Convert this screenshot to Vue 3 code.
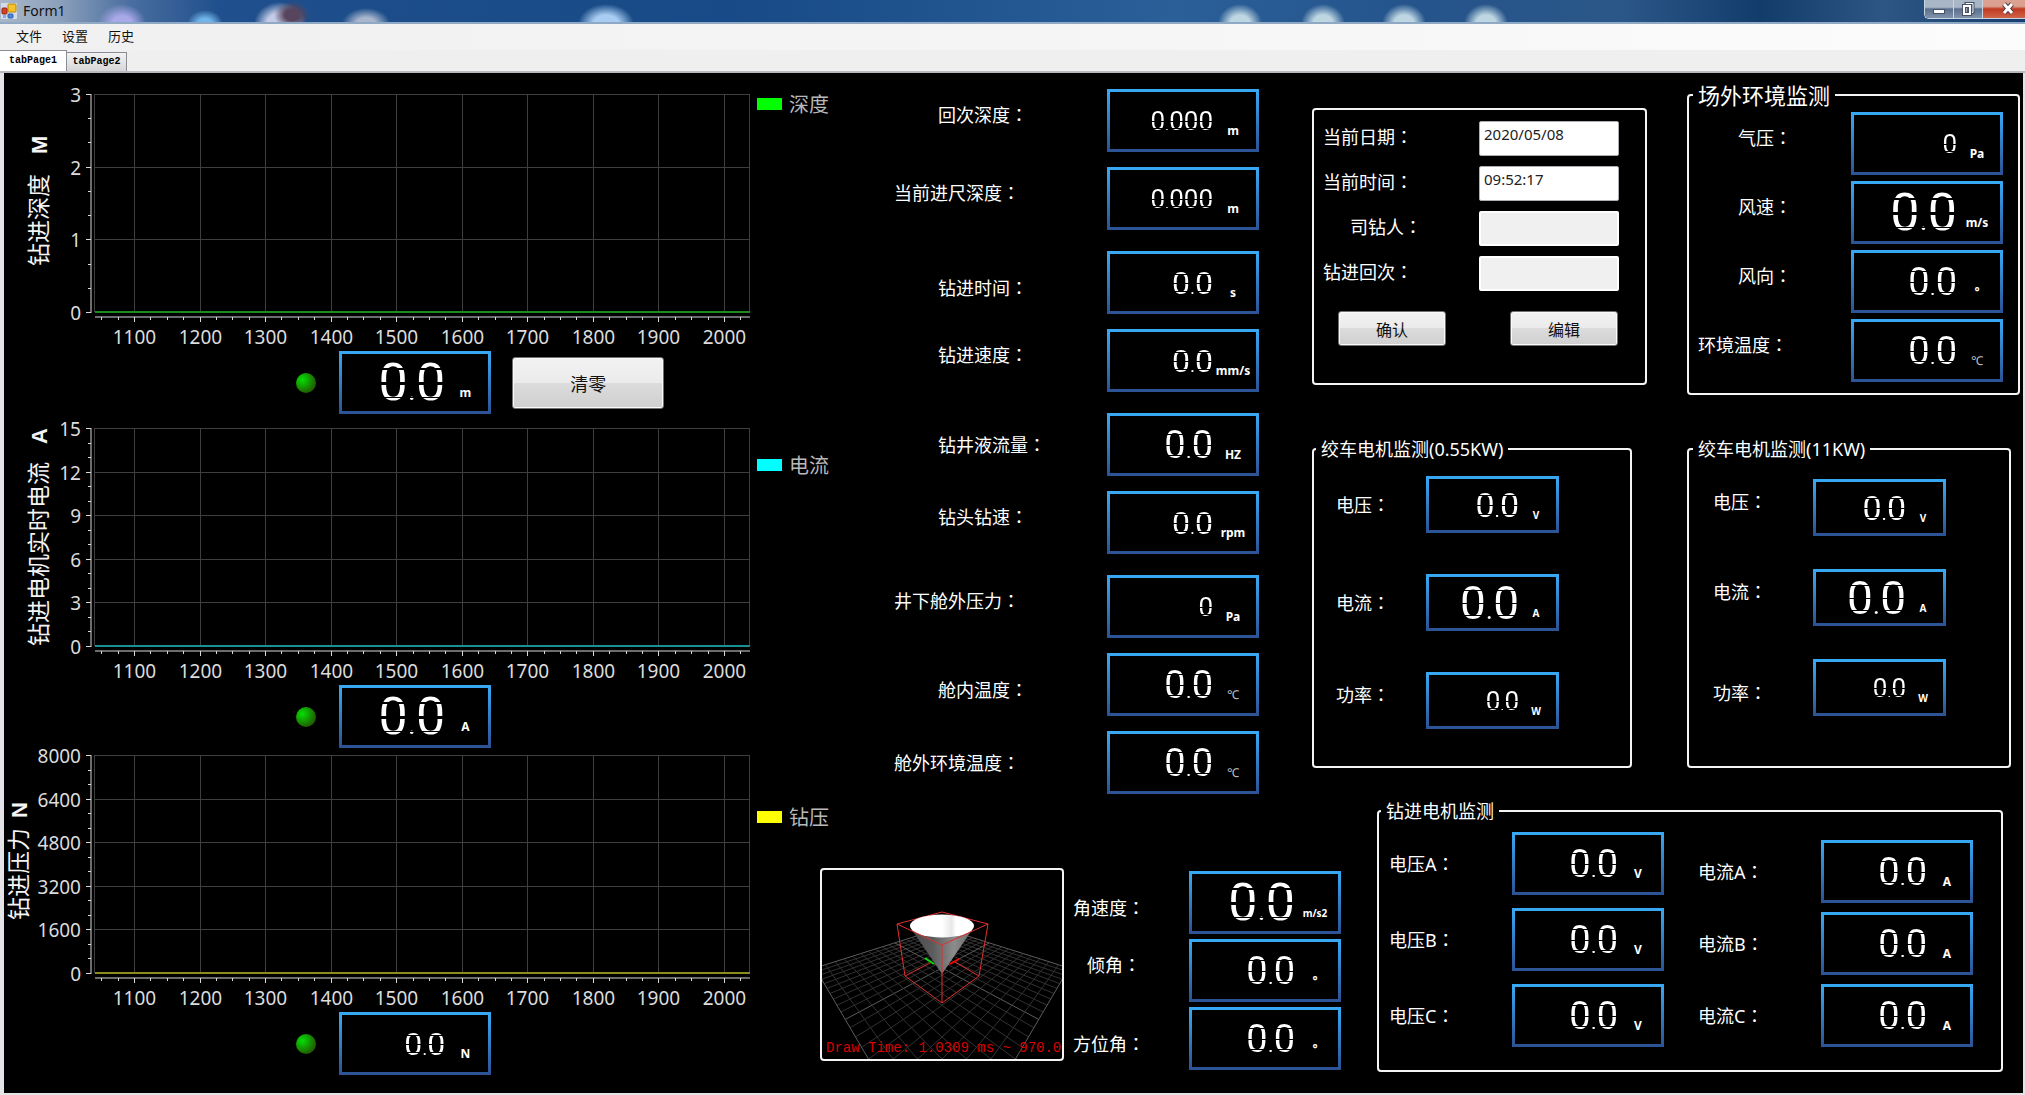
<script setup>
import { h as el } from 'vue'

const menus = ['文件', '设置', '历史']

// Digital readout: the decimal point is set smaller than the digits.
const Digits = ({ value = '0.0', size }) => {
  const [whole, frac] = value.split('.')
  const parts = frac ? [whole, el('span', { class: 'dot' }, '.'), frac] : [whole]
  return el('span', { class: 'num', style: { fontSize: size + 'px' } }, parts)
}

const xTicks = [1100, 1200, 1300, 1400, 1500, 1600, 1700, 1800, 1900, 2000]
const plot = { left: 91, right: 746, top: 6, height: 218 }
const xAt = (v) => Math.round(130 + (v - 1100) * 0.6555) + 0.5
const minorX = []
for (let v = 1050; v <= 2025; v += 25) {
  if (v % 100 !== 0) minorX.push(v)
}

function yTicks(values) {
  const step = plot.height / (values.length - 1)
  return values.map((v, i) => ({ v, y: Math.round(plot.top + i * step) + 0.5 }))
}
function yMinor(values) {
  const n = (values.length - 1) * 3
  return Array.from({ length: n }, (_, i) => Math.round(plot.top + (i * plot.height) / n) + 0.5)
}

const charts = [
  { id: 'depth', title: '钻进深度', mark: 'M', gap: 20, tx: 43, ty: 178, values: [3, 2, 1, 0], line: '#1c8a1c', legend: '深度', color: '#00ff00', size: 52, unit: 'm', clear: true },
  { id: 'current', title: '钻进电机实时电流', mark: 'A', gap: 18, tx: 43, ty: 224, values: [15, 12, 9, 6, 3, 0], line: '#1a9090', legend: '电流', color: '#00ffff', size: 52, unit: 'A' },
  { id: 'force', title: '钻进压力', mark: 'N', gap: 10, tx: 23, ty: 171, values: [8000, 6400, 4800, 3200, 1600, 0], line: '#8c8c1c', legend: '钻压', color: '#ffff00', size: 32, unit: 'N' },
]

const readings = [
  { name: '回次深度', value: '0.000', unit: 'm', size: 26, at: 'up' },
  { name: '当前进尺深度', value: '0.000', unit: 'm', size: 26, at: 'up', long: true },
  { name: '钻进时间', value: '0.0', unit: 's', size: 32, at: 'down', far: true },
  { name: '钻进速度', value: '0.0', unit: 'mm/s', size: 32, at: 'up' },
  { name: '钻井液流量', value: '0.0', unit: 'HZ', size: 38, at: 'mid', far: true },
  { name: '钻头钻速', value: '0.0', unit: 'rpm', size: 32, at: 'up' },
  { name: '井下舱外压力', value: '0', unit: 'Pa', size: 26, at: 'up', long: true, far: true },
  { name: '舱内温度', value: '0.0', unit: '℃', size: 38, at: 'down' },
  { name: '舱外环境温度', value: '0.0', unit: '℃', size: 38, at: 'mid', long: true },
]

const env = [
  { name: '气压', value: '0', unit: 'Pa', size: 26 },
  { name: '风速', value: '0.0', unit: 'm/s', size: 52 },
  { name: '风向', value: '0.0', unit: '°', size: 38 },
  { name: '环境温度', value: '0.0', unit: '℃', size: 38, long: true },
]

const winches = [
  {
    id: 'w1', title: '绞车电机监测(0.55KW)',
    rows: [
      { name: '电压', unit: 'V', size: 34, at: 'mid' },
      { name: '电流', unit: 'A', size: 46, at: 'mid' },
      { name: '功率', unit: 'W', size: 26, at: 'up' },
    ],
  },
  {
    id: 'w2', title: '绞车电机监测(11KW)',
    rows: [
      { name: '电压', unit: 'V', size: 34, at: 'up' },
      { name: '电流', unit: 'A', size: 46, at: 'up' },
      { name: '功率', unit: 'W', size: 26, at: 'down' },
    ],
  },
]

const angles = [
  { name: '角速度', unit: 'm/s2', size: 52, at: 'down' },
  { name: '倾角', unit: '°', size: 38, at: 'up', indent: true },
  { name: '方位角', unit: '°', size: 38, at: 'down' },
]

const motor = [
  { id: 'mv', unit: 'V', names: ['电压A', '电压B', '电压C'] },
  { id: 'ma', unit: 'A', names: ['电流A', '电流B', '电流C'] },
]

// Perspective projection of the unit square onto the floor of the 3D view.
const floor = { b: [122, 60], r: [249, 100], f: [122, 316], l: [-5, 100] }
const sx = floor.b[0] - floor.r[0] + floor.f[0] - floor.l[0]
const sy = floor.b[1] - floor.r[1] + floor.f[1] - floor.l[1]
const d1 = [floor.r[0] - floor.f[0], floor.r[1] - floor.f[1]]
const d2 = [floor.l[0] - floor.f[0], floor.l[1] - floor.f[1]]
const det = d1[0] * d2[1] - d2[0] * d1[1]
const g = (sx * d2[1] - d2[0] * sy) / det
const h = (d1[0] * sy - sx * d1[1]) / det
function project(u, v) {
  const w = g * u + h * v + 1
  const x = (floor.r[0] * (1 + g) - floor.b[0]) * u + (floor.l[0] * (1 + h) - floor.b[0]) * v + floor.b[0]
  const y = (floor.r[1] * (1 + g) - floor.b[1]) * u + (floor.l[1] * (1 + h) - floor.b[1]) * v + floor.b[1]
  return [x / w, y / w]
}
const floorLines = []
for (let i = 0; i <= 20; i++) {
  const t = i / 20
  const edge = i % 10 === 0
  const [a, b, c, d] = [project(t, 0), project(t, 1), project(0, t), project(1, t)]
  floorLines.push({ a, b, edge }, { a: c, b: d, edge })
}
</script>

<template>
  <div class="window">
    <header class="titlebar">
      <svg class="app-icon" width="16" height="16" viewBox="0 0 16 16" aria-hidden="true">
        <rect x="0" y="0" width="16" height="16" fill="#dfe6ee" opacity=".8" />
        <rect x="7" y="1" width="8" height="8" rx="1" fill="#f5c22c" stroke="#b88710" />
        <rect x="1" y="5" width="5" height="6" rx="1" fill="#d8402c" stroke="#952212" />
        <rect x="7" y="11" width="5" height="4" rx="1" fill="#4b86e0" stroke="#2a5cae" />
        <rect x="2" y="12" width="3" height="3" fill="#7fb0ee" />
      </svg>
      <span class="app-title">Form1</span>
      <div class="window-buttons">
        <button type="button" aria-label="最小化">
          <svg width="14" height="12" viewBox="0 0 14 12"><rect x="1.500" y="6.500" width="11" height="4" fill="#fff" stroke="#45526a" /></svg>
        </button>
        <button type="button" aria-label="还原">
          <svg width="14" height="14" viewBox="0 0 14 14" fill="none">
            <path d="M5 1.500h7v9H5z" stroke="#45526a" stroke-width="3" /><path d="M5 1.500h7v9H5z" stroke="#fff" />
            <path d="M3 4h6v8H3z" stroke="#45526a" stroke-width="4" /><path d="M3 4h6v8H3z" stroke="#fff" stroke-width="2" />
          </svg>
        </button>
        <button type="button" class="close" aria-label="关闭">
          <svg width="14" height="14" viewBox="0 0 14 14" fill="none">
            <path d="M3 2l8 9M11 2l-8 9" stroke="#5a3a44" stroke-width="5" /><path d="M3 2l8 9M11 2l-8 9" stroke="#fff" stroke-width="3" />
          </svg>
        </button>
      </div>
    </header>

    <nav class="menubar">
      <button v-for="m in menus" :key="m" type="button">{{ m }}</button>
    </nav>

    <div class="tabs" role="tablist">
      <button type="button" role="tab" class="tab active" aria-selected="true">tabPage1</button>
      <button type="button" role="tab" class="tab" aria-selected="false">tabPage2</button>
    </div>

    <main class="page">
      <section class="charts">
        <div v-for="c in charts" :key="c.id" class="chart-block" :class="c.id">
          <div class="chart-row">
            <svg class="chart" viewBox="0 0 750 263">
              <text class="axis-title" :transform="`translate(${c.tx} ${c.ty}) rotate(-90)`">{{ c.title }}<tspan class="mark" :dx="c.gap">{{ c.mark }}</tspan></text>
              <g class="grid">
                <line v-for="t in yTicks(c.values)" :key="'g' + t.v" :x1="plot.left" :x2="plot.right" :y1="t.y" :y2="t.y" />
                <line v-for="v in xTicks" :key="'x' + v" :x1="xAt(v)" :x2="xAt(v)" y1="6" y2="224" />
                <line x1="90.500" x2="90.500" y1="6" y2="224" />
                <line x1="745.500" x2="745.500" y1="6" y2="224" />
              </g>
              <line :x1="plot.left" :x2="plot.right" y1="224" y2="224" :stroke="c.line" stroke-width="2" />
              <g class="axis">
                <line x1="87" x2="87" y1="6" y2="225" />
                <line v-for="t in yTicks(c.values)" :key="'t' + t.v" x1="82" x2="87" :y1="t.y" :y2="t.y" />
                <line v-for="y in yMinor(c.values)" :key="'m' + y" x1="84" x2="87" :y1="y" :y2="y" />
                <line x1="91" x2="746" y1="229" y2="229" />
                <line v-for="v in xTicks" :key="'t' + v" :x1="xAt(v)" :x2="xAt(v)" y1="229" y2="234" />
                <line v-for="v in minorX" :key="'m' + v" :x1="xAt(v)" :x2="xAt(v)" y1="229" y2="232" />
              </g>
              <g class="tick-text">
                <text v-for="t in yTicks(c.values)" :key="t.v" x="77" :y="t.y + 7" text-anchor="end">{{ t.v }}</text>
                <text v-for="v in xTicks" :key="v" :x="xAt(v)" y="256" text-anchor="middle">{{ v }}</text>
              </g>
            </svg>
            <div class="legend"><i :style="{ background: c.color }"></i><span>{{ c.legend }}</span></div>
          </div>
          <div class="chart-foot">
            <span class="led"></span>
            <output class="meter"><Digits :size="c.size" /><span class="unit">{{ c.unit }}</span></output>
            <button v-if="c.clear" type="button" class="btn clear">清零</button>
          </div>
        </div>
      </section>

      <section class="right">
        <div class="upper">
          <div class="readings">
            <div v-for="(r, i) in readings" :key="r.name" class="row" :class="{ far: r.far }">
              <label :for="'r' + i" :class="[r.at, { long: r.long }]">{{ r.name }}<span class="colon">：</span></label>
              <output :id="'r' + i" class="meter"><Digits :value="r.value" :size="r.size" /><span class="unit" :class="{ dim: r.unit === '℃' }">{{ r.unit }}</span></output>
            </div>
          </div>

          <div class="panels">
            <form class="info" @submit.prevent>
              <div class="field"><label for="date">当前日期<span class="colon">：</span></label><input id="date" type="text" value="2020/05/08"></div>
              <div class="field"><label for="time">当前时间<span class="colon">：</span></label><input id="time" type="text" value="09:52:17"></div>
              <div class="field"><label for="driller" class="inset">司钻人<span class="colon">：</span></label><input id="driller" type="text" disabled></div>
              <div class="field"><label for="trip">钻进回次<span class="colon">：</span></label><input id="trip" type="text" disabled></div>
              <div class="actions">
                <button type="submit" class="btn">确认</button>
                <button type="button" class="btn">编辑</button>
              </div>
            </form>

            <fieldset class="env">
              <legend>场外环境监测</legend>
              <div v-for="(r, i) in env" :key="r.name" class="row">
                <label :for="'e' + i" class="up" :class="{ long: r.long }">{{ r.name }}<span class="colon">：</span></label>
                <output :id="'e' + i" class="meter"><Digits :value="r.value" :size="r.size" /><span class="unit" :class="{ dim: r.unit === '℃' }">{{ r.unit }}</span></output>
              </div>
            </fieldset>

            <fieldset v-for="w in winches" :key="w.id" class="winch" :class="w.id">
              <legend>{{ w.title }}</legend>
              <div v-for="r in w.rows" :key="r.name" class="row">
                <label :for="w.id + r.unit" :class="r.at">{{ r.name }}<span class="colon">：</span></label>
                <output :id="w.id + r.unit" class="meter small"><Digits :size="r.size" /><span class="unit">{{ r.unit }}</span></output>
              </div>
            </fieldset>
          </div>
        </div>

        <div class="lower">
          <div class="view3d">
            <svg viewBox="0 0 240 189">
              <defs>
                <linearGradient id="cone" x1="0" x2="1"><stop offset="0" stop-color="#4a4a4a" /><stop offset=".35" stop-color="#5c5c5c" /><stop offset=".7" stop-color="#8c8c8c" /><stop offset="1" stop-color="#6a6a6a" /></linearGradient>
                <linearGradient id="lid" x1="0" x2="1"><stop offset=".5" stop-color="#fff" /><stop offset=".65" stop-color="#e8e8e8" /><stop offset=".72" stop-color="#fff" /></linearGradient>
              </defs>
              <g transform="translate(-2 -2)">
                <line v-for="(l, i) in floorLines" :key="i" :x1="l.a[0]" :y1="l.a[1]" :x2="l.b[0]" :y2="l.b[1]" :stroke="l.edge ? '#5c5c5c' : '#323232'" />
                <path d="M77 56L122 44L168 56M85 108L112 94M159 108L135 94" stroke="#e03030" fill="none" />
                <path d="M92 62L122 106L152 62z" fill="url(#cone)" />
                <path d="M105 90L114 96" stroke="#00e000" stroke-width="2" />
                <path d="M130 96L139 91" stroke="#ff0000" stroke-width="2" />
                <ellipse cx="122" cy="58" rx="32" ry="11.500" fill="url(#lid)" />
                <path d="M77 56L122 77L168 56M122 77V135M77 56L85 108L122 135L159 108L168 56" fill="none" stroke="#e03030" />
                <text class="draw-time" x="6" y="184">Draw Time: 1.0309 ms ~ 970.0</text>
              </g>
            </svg>
          </div>

          <div class="angles">
            <div v-for="(r, i) in angles" :key="r.name" class="row">
              <label :for="'a' + i" :class="[r.at, { indent: r.indent }]">{{ r.name }}<span class="colon">：</span></label>
              <output :id="'a' + i" class="meter"><Digits :size="r.size" /><span class="unit" :class="{ tiny: r.unit === 'm/s2' }">{{ r.unit }}</span></output>
            </div>
          </div>

          <fieldset class="motor">
            <legend>钻进电机监测</legend>
            <div v-for="m in motor" :key="m.id" class="motor-col" :class="m.id">
              <div v-for="n in m.names" :key="n" class="row">
                <label :for="n" class="mid">{{ n }}<span class="colon">：</span></label>
                <output :id="n" class="meter"><Digits :size="38" /><span class="unit">{{ m.unit }}</span></output>
              </div>
            </div>
          </fieldset>
        </div>
      </section>
    </main>
  </div>
</template>

<style>
body {
  margin: 0;
  background: #f0f0f0;
}
</style>

<style scoped>
* {
  box-sizing: border-box;
}
.window {
  display: flex;
  flex-direction: column;
  min-height: 100vh;
  font-family: "Noto Sans", "Noto Sans CJK SC", sans-serif;
  font-size: 18px;
  color: #fff;
}
button,
input {
  font: inherit;
}

.titlebar {
  display: flex;
  align-items: flex-start;
  height: 24px;
  padding-left: 1px;
  overflow: hidden;
  border-bottom: 2px solid #8fa8c4;
  background:
    radial-gradient(ellipse 24px 20px at 122px 24px, #a9a8e8 40%, transparent),
    radial-gradient(ellipse 18px 14px at 205px 24px, #6fb4ea 40%, transparent),
    radial-gradient(ellipse 18px 14px at 292px 15px, #56455c 40%, transparent),
    radial-gradient(ellipse 26px 22px at 280px 24px, #c4cbe6 50%, transparent),
    radial-gradient(ellipse 24px 16px at 366px 24px, #a9b6cc 40%, transparent),
    radial-gradient(ellipse 28px 20px at 606px 24px, #a9cdf2 45%, transparent),
    radial-gradient(ellipse 22px 20px at 1240px 24px, #bdd6e2 45%, transparent),
    radial-gradient(ellipse 22px 20px at 1323px 24px, #bdd6e2 45%, transparent),
    radial-gradient(ellipse 22px 20px at 1404px 24px, #bdd6e2 45%, transparent),
    radial-gradient(ellipse 22px 20px at 1486px 24px, #bdd6e2 45%, transparent),
    linear-gradient(90deg, #a9b7c8 0, #8ba0bb 60px, #4a6ea0 130px, #1f4f8c 220px, #174a86 36%, #2b5f98 58%, #25548c 70%, #2b5788 80%, #123c6a 87%, #2d5684 93%, #163e70 100%);
}
.app-icon {
  margin-top: 3px;
}
.app-title {
  margin-left: 6px;
  font-size: 14px;
  line-height: 22px;
  color: #111;
}
.window-buttons {
  display: flex;
  height: 19px;
  margin-left: auto;
  border: 1px solid #c8d4e2;
  border-top: 0;
  border-right: 0;
  border-radius: 0 0 0 5px;
  overflow: hidden;
}
.window-buttons button {
  display: flex;
  align-items: center;
  justify-content: center;
  width: 29px;
  padding: 0;
  border: 0;
  border-right: 1px solid #c8d4e2;
  background: linear-gradient(#a9b6c6 0 40%, #5b6f8b 50%, #8194ac);
}
.window-buttons .close {
  width: 42px;
  padding-left: 8px;
  border: 0;
  background: linear-gradient(#dba090 0 35%, #c03a20 50%, #d0644a);
}

.menubar {
  display: flex;
  gap: 20px;
  height: 26px;
  padding-left: 16px;
  background: linear-gradient(90deg, #f0f0f0, #f6f6f6 60%, #fcfcfc);
}
.menubar button {
  padding: 0 0 2px;
  border: 0;
  background: none;
  font-size: 13px;
  line-height: 22px;
  color: #111;
}
.tabs {
  display: flex;
  align-items: flex-end;
  height: 23px;
  border-bottom: 2px solid #b8b8be;
  background: #efefef;
}
.tab {
  height: 19px;
  width: 60px;
  padding: 0;
  border: 1px solid #8c8c94;
  border-bottom: 0;
  border-left: 0;
  background: linear-gradient(#f2f2f2, #d6d6d6);
  font: bold 10px/18px "Liberation Mono", monospace;
  color: #000;
}
.tab.active {
  width: 67px;
  height: 21px;
  background: #fff;
}

.page {
  flex: 1;
  display: grid;
  grid-template-columns: minmax(0, 812fr) minmax(0, 1207fr);
  border: solid #e4e4e8;
  border-width: 0 2px 2px 4px;
  background: #000;
}

.charts {
  padding-top: 15px;
}
.chart-block.current {
  margin-top: 8px;
}
.chart-block.force {
  margin-top: 1px;
}
.chart-row {
  display: grid;
  grid-template-columns: minmax(0, 750fr) minmax(0, 62fr);
}
.chart {
  display: block;
  width: 100%;
  overflow: visible;
}
.grid line {
  stroke: #3e3e3e;
}
.axis line {
  stroke: #d8d8d8;
}
.axis-title {
  font: 23px "Noto Sans CJK SC", sans-serif;
  fill: #f4f4f4;
}
.mark {
  font: bold 22px "Liberation Sans", sans-serif;
}
.tick-text {
  font-size: 19px;
  fill: #dcdcdc;
}
.legend {
  display: flex;
  align-items: center;
  align-self: start;
  gap: 7px;
  padding-left: 3px;
  font: 20px/24px "Noto Sans CJK SC", sans-serif;
  color: #b8b8b8;
  white-space: nowrap;
}
.legend i {
  flex: none;
  width: 25px;
  height: 12px;
}
.depth .legend {
  padding-top: 4px;
}
.current .legend {
  padding-top: 31px;
}
.force .legend {
  padding-top: 56px;
}
.chart-foot {
  display: flex;
  align-items: center;
  padding-left: 36%;
}
.led {
  width: 20px;
  height: 20px;
  margin-right: 23px;
  border-radius: 50%;
  background: radial-gradient(circle at 32% 34%, #04e004, #12a000 35%, #1d6a00 65%, #2c3c00);
}

.meter {
  flex: none;
  display: flex;
  align-items: center;
  justify-content: flex-end;
  width: 152px;
  height: 63px;
  padding-right: 3px;
  border: 3px solid;
  border-image: linear-gradient(#38a8f4, #2c5496) 1;
  background: #000;
}
.num {
  font-family: Roboto, "Liberation Sans", sans-serif;
  line-height: 1;
  color: transparent;
  background: linear-gradient(#fff 0 22%, #000 22% 25%, #fff 25% 49%, #000 49% 53%, #fff 53% 76%, #000 76% 79%, #fff 79%);
  -webkit-background-clip: text;
  background-clip: text;
}
.num :deep(.dot) {
  font-size: 60%;
}
.unit {
  flex: none;
  width: 40px;
  padding-top: 20px;
  text-align: center;
  font-size: 12px;
  font-weight: 700;
  line-height: 18px;
}
.unit.tiny {
  font-size: 10px;
}
.unit.dim {
  font-weight: 400;
  color: #c4c4c4;
}
.meter.small {
  width: 133px;
  height: 57px;
}
.small .unit {
  width: 34px;
  font-size: 10px;
}

.row {
  display: flex;
}
label {
  flex: none;
  line-height: 26px;
  white-space: nowrap;
}
.colon {
  font-family: "Noto Sans CJK TC", sans-serif;
}
.row label {
  align-self: center;
}
.row label.up {
  padding-bottom: 12px;
}
.row label.down {
  padding-top: 10px;
}

.btn {
  border: 1px solid #707070;
  border-radius: 3px;
  background: linear-gradient(#f2f2f2, #ebebeb 49%, #dcdcdc 50%, #cfcfcf);
  box-shadow: inset 0 0 0 1px #fafafa;
  color: #111;
}
.clear {
  width: 152px;
  height: 52px;
  margin-left: 21px;
}

.upper {
  display: grid;
  grid-template-columns: minmax(0, 496fr) minmax(0, 711fr);
}
.readings {
  padding-top: 16px;
}
.readings .row + .row {
  margin-top: 15px;
}
.readings .row + .row.far {
  margin-top: 21px;
}
.readings label {
  width: 291px;
  padding-left: 122px;
}
.readings label.long {
  padding-left: 78px;
}

.panels {
  display: grid;
  grid-template-columns: minmax(0, 335fr) minmax(0, 333fr);
  column-gap: 40px;
  row-gap: 42px;
  padding: 10px 3px 0 0;
  align-items: start;
  align-content: start;
}
.info {
  margin-top: 25px;
  padding: 11px 10px 37px 9px;
  border: 2px solid #f4f4f4;
  border-radius: 4px;
}
.field {
  display: flex;
  justify-content: space-between;
  align-items: center;
  margin-bottom: 10px;
  padding-right: 16px;
}
.field label {
  padding-bottom: 4px;
}
.field label.inset {
  padding-left: 27px;
}
.field input {
  width: 140px;
  height: 35px;
  padding: 0 4px 9px;
  border: 1px solid #abadb3;
  border-radius: 2px;
  background: #fff;
  font-size: 15px;
  color: #222;
}
.field input:disabled {
  background: #f0f0f0;
  border: 2px solid #fff;
}
.actions {
  display: flex;
  justify-content: space-between;
  padding: 10px 17px 0 15px;
}
.actions .btn {
  width: 108px;
  height: 35px;
  font-size: 16px;
}

fieldset {
  min-width: 0;
  margin: 0;
  padding: 0;
  border: 2px solid #f4f4f4;
  border-radius: 4px;
}
legend {
  padding: 0 5px;
  line-height: 24px;
}
.env {
  padding: 5px 15px 11px 9px;
}
.env legend {
  margin-left: -5px;
  font-size: 22px;
}
.env .row {
  justify-content: space-between;
}
.env .row + .row {
  margin-top: 6px;
}
.env label {
  padding-left: 40px;
}
.env label.long {
  padding-left: 0;
}
.winch {
  align-self: stretch;
}
.winch legend {
  margin-left: -20px;
}
.winch label {
  width: 90px;
}
.w1 {
  margin-right: 15px;
  padding: 15px 0 37px 22px;
}
.w1 .row + .row {
  margin-top: 41px;
}
.w2 {
  margin-right: 9px;
  padding: 18px 0 0 24px;
}
.w2 label {
  width: 100px;
}
.w2 .row + .row {
  margin-top: 33px;
}

.lower {
  display: grid;
  grid-template-columns: minmax(0, 244fr) minmax(0, 313fr) minmax(0, 626fr);
  align-items: start;
  padding: 5px 20px 0 4px;
}
.view3d {
  margin-top: 69px;
  overflow: hidden;
  border: 2px solid #f4f4f4;
  border-radius: 4px;
}
.view3d svg {
  display: block;
  width: 100%;
}
.draw-time {
  font: 14px "Liberation Mono", monospace;
  fill: #d80000;
}
.angles {
  display: grid;
  row-gap: 5px;
  margin: 72px 0 0 9px;
}
.angles label {
  width: 116px;
}
.angles label.indent {
  padding-left: 14px;
}
.motor {
  display: flex;
  justify-content: space-between;
  padding: 9px 28px 23px 10px;
}
.motor legend {
  margin-left: -8px;
}
.motor-col {
  display: grid;
  row-gap: 13px;
}
.motor-col label {
  width: 123px;
}
.motor-col.ma {
  row-gap: 9px;
  padding-top: 8px;
}
</style>
